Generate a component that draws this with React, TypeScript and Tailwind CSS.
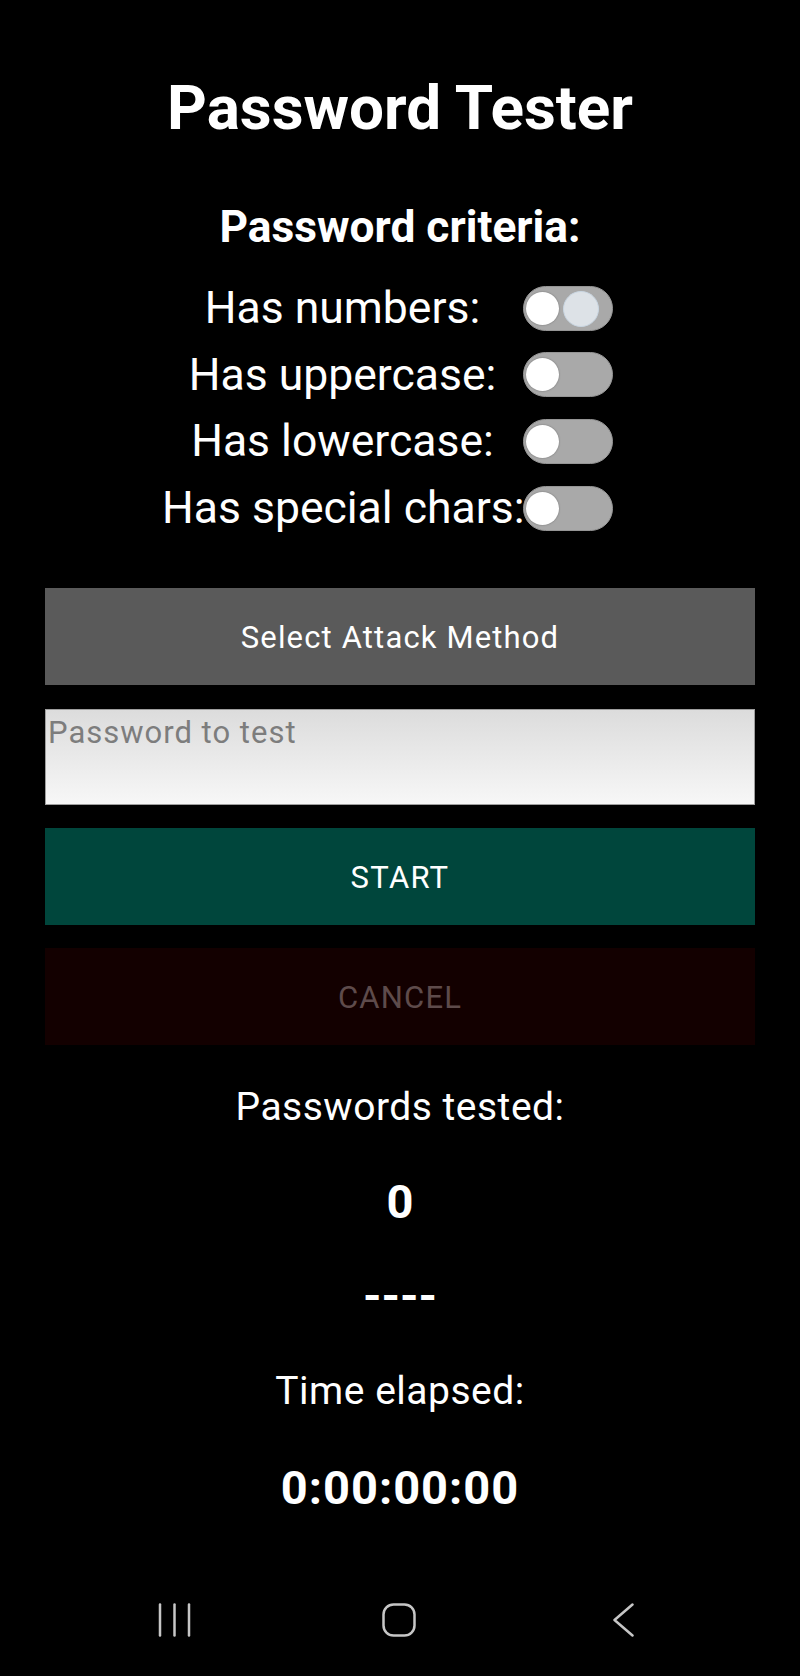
import React from "react";

function Toggle({ ghost }: { ghost?: boolean }) {
  return (
    <div className="relative w-[90px] h-[45px] rounded-full bg-[#a9a9a9] border border-[#959595] flex items-center shrink-0">
      <div className="ml-[2px] w-[33px] h-[33px] rounded-full bg-white shadow-[0_0_2px_rgba(0,0,0,0.35)]" />
      {ghost && (
        <div className="absolute left-[39px] top-[4px] w-[36px] h-[36px] rounded-full bg-[#dde2e7] border border-[#c9d6e2]" />
      )}
    </div>
  );
}

function Row({ label, ghost }: { label: string; ghost?: boolean }) {
  return (
    <div className="h-[66.67px] flex items-center justify-center pr-[25px]">
      <div className="w-[361px] text-center text-[44.5px] leading-none text-white whitespace-nowrap">
        {label}
      </div>
      <Toggle ghost={ghost} />
    </div>
  );
}

export default function App() {
  return (
    <div className="w-full h-[1676px] bg-black flex flex-col [font-family:Roboto,'Noto_Sans',sans-serif] text-white overflow-hidden">
      <div className="mt-[60px] h-[95px] leading-[95px] text-center text-[62px] font-bold">
        Password Tester
      </div>
      <div className="mt-[42px] h-[61px] leading-[61px] text-center text-[44.3px] font-bold">
        Password criteria:
      </div>
      <div className="mt-[17px] flex flex-col">
        <Row label="Has numbers:" ghost />
        <Row label="Has uppercase:" />
        <Row label="Has lowercase:" />
        <Row label="Has special chars:" />
      </div>
      <div className="mx-[45px] mt-[46px] flex flex-col">
        <div className="h-[97px] pt-[4px] bg-[#5a5a5a] flex items-center justify-center text-[31px] tracking-[1.15px] text-white">
          Select Attack Method
        </div>
        <div className="mt-[24px] h-[96px] border border-[#9e9e9e] bg-gradient-to-b from-[#dcdcdc] to-[#f7f7f7] pl-[2px]">
          <div className="h-[46px] leading-[46px] text-[31px] tracking-[1px] text-[#7d7d7d]">Password to test</div>
        </div>
        <div className="mt-[23px] h-[97px] pt-[4px] bg-[#00463c] flex items-center justify-center text-[31px] tracking-[1.3px] text-white">
          START
        </div>
        <div className="mt-[23px] h-[97px] pt-[4px] bg-[#130000] flex items-center justify-center text-[31px] tracking-[1.2px] text-[#5e4b4b]">
          CANCEL
        </div>
      </div>
      <div className="mt-[15px] flex flex-col text-center">
        <div className="h-[95px] leading-[95px] text-[39px] tracking-[0.5px]">Passwords tested:</div>
        <div className="h-[93px] leading-[93px] text-[47px] font-bold">0</div>
        <div className="h-[95px] leading-[95px] text-[47px] font-bold">----</div>
        <div className="h-[97px] leading-[97px] text-[39px] tracking-[0.5px]">Time elapsed:</div>
        <div className="h-[95px] leading-[95px] text-[47px] tracking-[1px] font-bold">0:00:00:00</div>
      </div>
      <div className="mt-auto h-[112px] flex items-center pl-[158px]">
        <svg width="34" height="34" viewBox="0 0 34 34" fill="none" stroke="#c6c6c6" strokeWidth="2.5" strokeLinecap="round">
          <line x1="2" y1="1.5" x2="2" y2="32.5" />
          <line x1="16.5" y1="1.5" x2="16.5" y2="32.5" />
          <line x1="31" y1="1.5" x2="31" y2="32.5" />
        </svg>
        <svg className="ml-[190px]" width="34" height="34" viewBox="0 0 34 34" fill="none" stroke="#c6c6c6" strokeWidth="2.5">
          <rect x="1.5" y="1.5" width="31" height="31" rx="10" />
        </svg>
        <svg className="ml-[197px]" width="21" height="34" viewBox="0 0 21 34" fill="none" stroke="#c6c6c6" strokeWidth="2.5" strokeLinecap="round" strokeLinejoin="round">
          <polyline points="19.5,1.5 1.5,17 19.5,32.5" />
        </svg>
      </div>
    </div>
  );
}
